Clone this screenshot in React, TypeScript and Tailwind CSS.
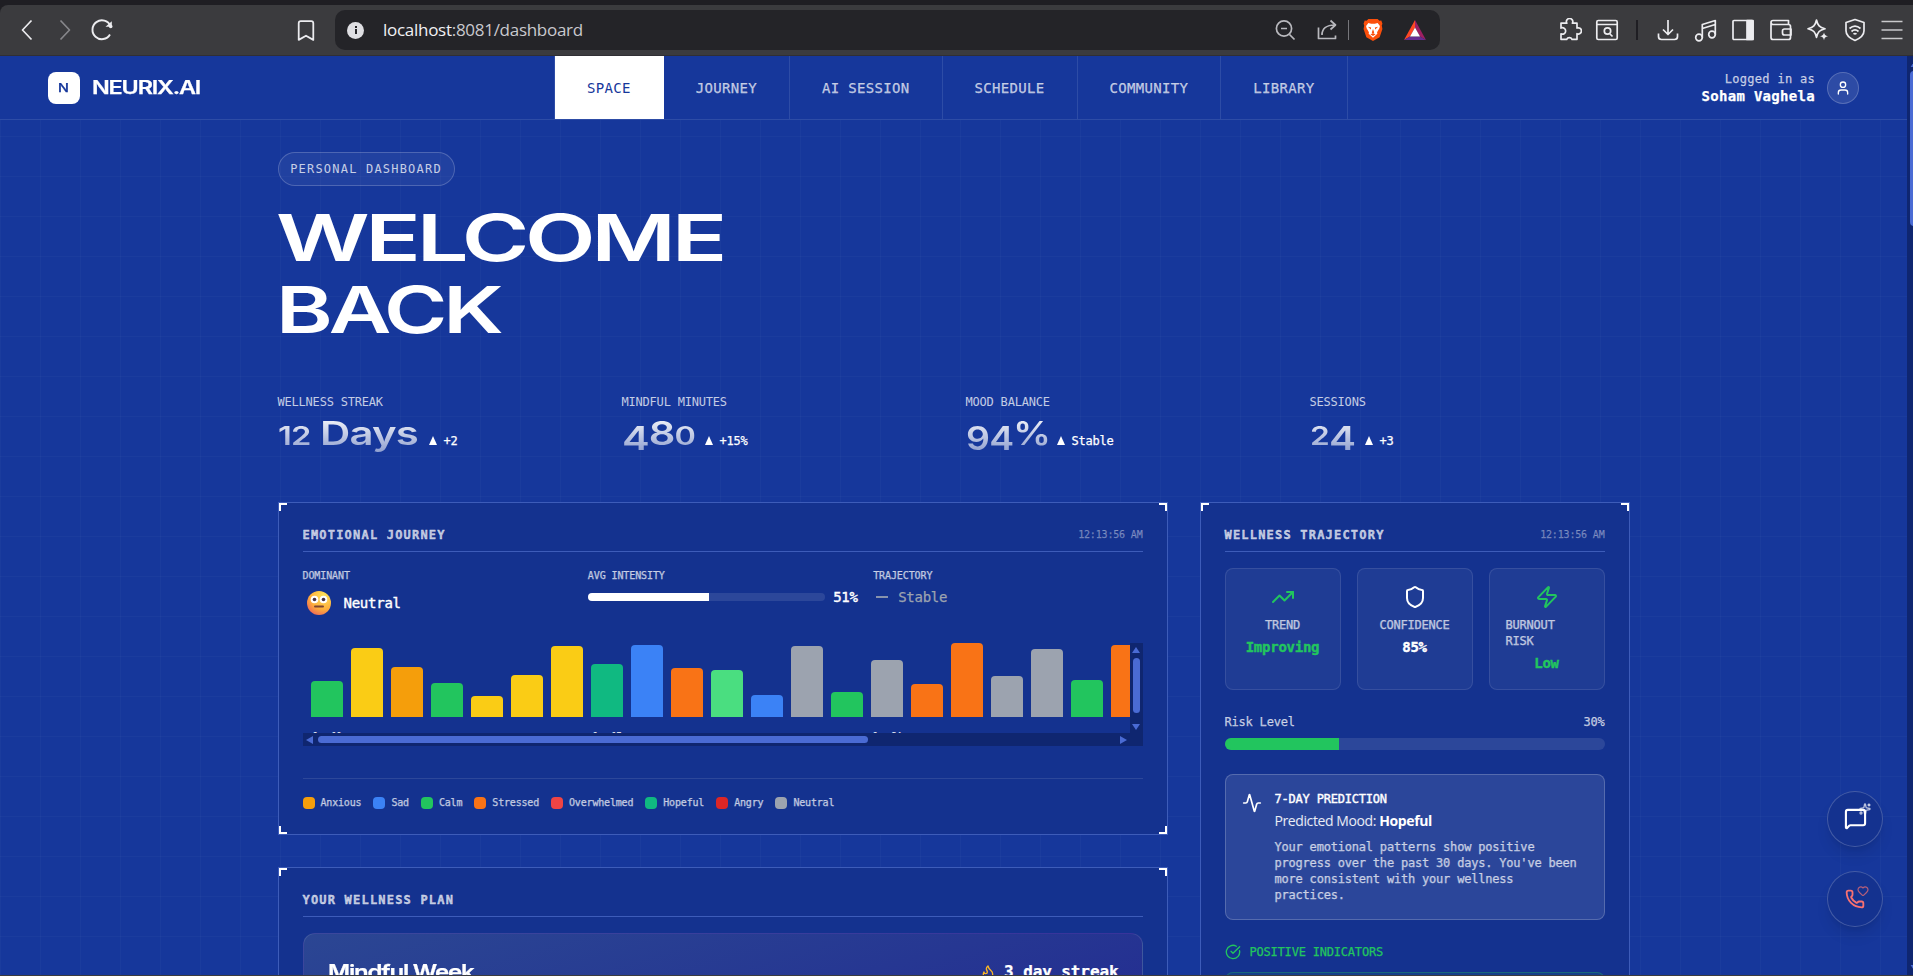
import type { ReactNode } from 'react';
import {
  Activity,
  Bookmark,
  CircleCheckBig,
  Flame,
  Heart,
  MessageSquare,
  Phone,
  Shield,
  Sparkles,
  TrendingUp,
  User,
  Zap,
} from 'lucide-react';

const navItems = ['SPACE', 'JOURNEY', 'AI SESSION', 'SCHEDULE', 'COMMUNITY', 'LIBRARY'];

const stats = [
  { label: 'WELLNESS STREAK', value: '12 Days', change: '+2', width: 'w-[143px]', scale: 'scale-x-[1.31]' },
  { label: 'MINDFUL MINUTES', value: '480', change: '+15%', width: 'w-[75px]', scale: 'scale-x-[1.3]' },
  { label: 'MOOD BALANCE', value: '94%', change: 'Stable', width: 'w-[83px]', scale: 'scale-x-[1.17]' },
  { label: 'SESSIONS', value: '24', change: '+3', width: 'w-[47px]', scale: 'scale-x-[1.27]' },
];

const bars = [
  { height: 36, color: 'bg-[#22c55e]', date: 'Jan 10' },
  { height: 69, color: 'bg-[#facc15]' },
  { height: 50, color: 'bg-[#f59e0b]' },
  { height: 34, color: 'bg-[#22c55e]' },
  { height: 21, color: 'bg-[#facc15]' },
  { height: 42, color: 'bg-[#facc15]' },
  { height: 71, color: 'bg-[#facc15]' },
  { height: 53, color: 'bg-[#10b981]', date: 'Jan 17' },
  { height: 72, color: 'bg-[#3b82f6]' },
  { height: 49, color: 'bg-[#f97316]' },
  { height: 47, color: 'bg-[#4ade80]' },
  { height: 22, color: 'bg-[#3b82f6]' },
  { height: 71, color: 'bg-[#9ca3af]' },
  { height: 25, color: 'bg-[#22c55e]' },
  { height: 57, color: 'bg-[#9ca3af]', date: 'Jan 24' },
  { height: 33, color: 'bg-[#f97316]' },
  { height: 74, color: 'bg-[#f97316]' },
  { height: 41, color: 'bg-[#9ca3af]' },
  { height: 68, color: 'bg-[#9ca3af]' },
  { height: 37, color: 'bg-[#22c55e]' },
  { height: 72, color: 'bg-[#f97316]' },
];

const legend = [
  { name: 'Anxious', color: 'bg-[#f59e0b]' },
  { name: 'Sad', color: 'bg-[#3b82f6]' },
  { name: 'Calm', color: 'bg-[#22c55e]' },
  { name: 'Stressed', color: 'bg-[#f97316]' },
  { name: 'Overwhelmed', color: 'bg-[#ef4444]' },
  { name: 'Hopeful', color: 'bg-[#10b981]' },
  { name: 'Angry', color: 'bg-[#dc2626]' },
  { name: 'Neutral', color: 'bg-[#9ca3af]' },
];

function ToolIcon({ children, className = '' }: { children: ReactNode; className?: string }) {
  return (
    <svg viewBox="0 0 24 24" fill="none" stroke="currentColor" strokeWidth="1.7" strokeLinejoin="round" className={`size-6 shrink-0 ${className}`}>
      {children}
    </svg>
  );
}

function BrowserBar() {
  return (
    <div className="h-14 shrink-0 bg-[#1f1e23] pt-[5px]">
      <div className="flex h-[51px] items-center rounded-tl-lg border-b border-[#302f34] bg-[#3b3b3e] text-[#ececef]">
        <div className="flex w-[335px] shrink-0 items-center">
          <ToolIcon className="ml-[15px]"><path d="M16.5 2.5 7.5 12l9 9.5" /></ToolIcon>
          <ToolIcon className="ml-[14px] text-[#87878b]"><path d="m7.5 2.5 9 9.5-9 9.5" /></ToolIcon>
          <ToolIcon className="ml-[13px]">
            <path d="M20 16.5A9.4 9.4 0 1 1 20.5 8" strokeWidth="1.9" />
            <path d="M15.5 8.8h6.3V3.2z" fill="currentColor" stroke="none" />
            <circle cx="20.7" cy="8.4" r="1.8" fill="currentColor" stroke="none" />
          </ToolIcon>
          <Bookmark className="ml-[179px] h-[25px] w-[26px]" strokeWidth={1.7} />
        </div>
        <div className="flex h-10 w-[1105px] shrink-0 items-center rounded-[10px] bg-[#242428]">
          <div className="ml-3 flex size-[17px] items-center justify-center rounded-full bg-[#dedee2]">
            <svg viewBox="0 0 16 16" className="size-4 text-[#242428]" fill="currentColor">
              <rect x="7" y="7" width="2" height="5" />
              <rect x="7" y="4" width="2" height="2" />
            </svg>
          </div>
          <div className="ml-[19px] flex-1 pb-px font-['Open_Sans','Noto_Sans',sans-serif] text-[17px] tracking-[-0.28px] text-[#c9c9ce]">
            <span className="text-[#f1f1f4]">localhost</span>:8081/dashboard
          </div>
          <ToolIcon className="mr-[18px] text-[#b9b9be]">
            <circle cx="11" cy="10.5" r="7.6" />
            <path d="m16.5 16.5 5 5M8 10.5h6" />
          </ToolIcon>
          <ToolIcon className="mr-[9px] text-[#b9b9be]">
            <path d="M3.5 9.5V20.500h17v-3M7 17c0-6 4-10 13-10M15.500 2.500 20.500 7l-5 4.500" />
          </ToolIcon>
          <div className="h-5 w-px bg-[#77777c]" />
          <svg viewBox="0 0 22 26" className="ml-[13px] h-6 w-[22px]">
            <path d="M6 1h10l2 2 2-.2 1.200 3.400-.7 2 .7 3.800-3 8.800L11 25l-7.200-4.200L.8 12l.7-3.800-.7-2L2 2.800l2 .2z" fill="#fb4f0b" />
            <path d="m6 5.500 3 .7h4l3-.7 2.500 3.200-.6 2.500-2.500 4.300.3 1.500-4.700 4.300-4.700-4.300.3-1.500-2.500-4.300-.6-2.500z" fill="#fff" />
            <path d="m5.500 9.500 3.500.8-.4 2.200zM16.500 9.500l-3.500.8.400 2.200zM11 12l1.300 3.800L11 17l-1.300-1.200zM8.200 17.500l2.800-1 2.800 1L11 19.500z" fill="#fb4f0b" />
          </svg>
          <svg viewBox="0 0 22 20" className="mr-[14px] ml-[20px] h-5 w-[22px]">
            <path d="M11 0 0 20l6-3.500L11 7.500z" fill="#ff4724" />
            <path d="m11 0 11 20-6-3.500-5-9z" fill="#9e1f63" />
            <path d="M0 20h22l-6-3.500H6z" fill="#662d91" />
            <path d="m11 7.500 5 9H6z" fill="#fff" />
          </svg>
        </div>
        <div className="flex flex-1 items-center pl-[118px]">
          <ToolIcon>
            <path d="M3 5.200h5.800a3.200 3.200 0 1 1 5.600 0H19v4.900a3.100 3.100 0 1 1 0 5.600v5.600h-5a2.900 2.900 0 0 0-5.300 0H3v-5.500a3.200 3.200 0 1 0 0-5.700z" />
          </ToolIcon>
          <ToolIcon className="ml-[13px]">
            <rect x="1.800" y="2.500" width="20.400" height="19" rx="1.500" />
            <path d="M2 6.500h20M15 16l2.500 2.500" />
            <circle cx="12.500" cy="13" r="3.200" />
          </ToolIcon>
          <div className="mr-[18px] ml-[17px] h-5 w-[2px] bg-[#1f1e23]" />
          <ToolIcon><path d="M12 2v14M7 11.500l5 5 5-5M2.500 15.500v3a3 3 0 0 0 3 3h13a3 3 0 0 0 3-3v-3" /></ToolIcon>
          <ToolIcon className="ml-[14px]">
            <circle cx="5" cy="19.500" r="3.300" />
            <circle cx="18" cy="16.500" r="3.300" />
            <path d="M8.300 19.500V6.500l13-4v14M8.300 10.500l13-4" />
          </ToolIcon>
          <ToolIcon className="ml-[13px]">
            <rect x="2" y="2.500" width="20" height="19" rx="1" />
            <path d="M16 2.500h6v19h-6z" fill="currentColor" />
          </ToolIcon>
          <ToolIcon className="ml-[14px]">
            <path d="M2 5v14.500a2 2 0 0 0 2 2h15.500a2 2 0 0 0 2-2V8.500a2 2 0 0 0-2-2H4a2 2 0 0 1 0-4h15.500V6" />
            <path d="M22 11h-6.500a2 2 0 0 0-2 2v2a2 2 0 0 0 2 2H22z" />
          </ToolIcon>
          <ToolIcon className="ml-[13px]">
            <path d="M10.500 2c1.200 5.500 3 7.300 8.500 8.700-5.500 1.400-7.300 3.200-8.500 8.700C9.300 13.900 7.500 12.100 2 10.700 7.500 9.300 9.300 7.500 10.500 2z" />
            <path d="M18 14.500c.6 2.500 1.300 3.200 4 3.800-2.700.6-3.400 1.300-4 3.900-.6-2.600-1.300-3.300-4-3.900 2.700-.6 3.400-1.300 4-3.800z" fill="currentColor" stroke="none" />
          </ToolIcon>
          <ToolIcon className="ml-[13px]">
            <path d="m12 1.500 9 3v8.300c0 4.500-3.500 7.400-9 9.700-5.500-2.300-9-5.200-9-9.700V4.500z" />
            <path d="M6.500 10.500c3.500-3 7.500-3 11 0M8.500 13.500c2.300-2 4.700-2 7 0M10.500 16.200c1-.8 2-.8 3 0" />
          </ToolIcon>
          <ToolIcon className="ml-[13px] text-[#c9c9cc]"><path d="M1.500 3.500h21M1.500 12h21M1.500 20.500h21" /></ToolIcon>
        </div>
      </div>
    </div>
  );
}

function Header() {
  return (
    <header className="grid h-16 shrink-0 grid-cols-[554px_1fr_auto] border-b border-[#2d4ca6] bg-[#16379b] [-webkit-text-stroke:0.25px]">
      <div className="flex items-center pl-12">
        <div className="flex size-8 items-center justify-center rounded-lg bg-white font-['Inter',sans-serif] text-xs font-medium text-[#16379b]">
          <span className="inline-block scale-x-[1.2]">N</span>
        </div>
        <span className="ml-3 inline-block origin-left scale-x-[1.3] font-['Inter',sans-serif] text-[18px] font-semibold tracking-[-0.9px]">NEURIX.AI</span>
      </div>
      <nav className="flex border-l border-[#2d4ca6]">
        {navItems.map((item, i) => (
          <a
            key={item}
            className={`flex items-center border-r px-8 text-sm tracking-[0.320px] ${
              i === 0 ? 'border-white bg-white text-[#16379b] [-webkit-text-stroke:0]' : 'border-[#2d4ca6] text-white/70'
            }`}
          >
            {item}
          </a>
        ))}
      </nav>
      <div className="flex items-center pr-12">
        <div className="text-right">
          <div className="text-xs leading-[18px] tracking-[0.300px] text-white/70">Logged in as</div>
          <div className="-mt-px mb-px text-sm leading-[18px] font-bold tracking-[0.300px]">Soham Vaghela</div>
        </div>
        <div className="ml-3 flex size-8 items-center justify-center rounded-full border border-white/20 bg-white/10">
          <User className="size-4" />
        </div>
      </div>
    </header>
  );
}

// Text figures: 0-2 sit at x-height, 3-5, 7 and 9 hang below the baseline
function TextFigures({ value }: { value: string }) {
  return (
    <>
      {value.split('').map((char, i) => {
        if ('012'.includes(char)) return <span key={i} className="text-[25px] leading-none">{char}</span>;
        if ('34579'.includes(char)) return <span key={i} className="align-[-5px] leading-none">{char}</span>;
        return char;
      })}
    </>
  );
}

function Stats() {
  return (
    <div className="mb-12 grid grid-cols-4 gap-6">
      {stats.map((stat) => (
        <div key={stat.label} className="h-[60px]">
          <div className="text-xs leading-4 tracking-[-0.200px] text-white/75">{stat.label}</div>
          <div className="mt-1 flex items-baseline">
            <div className={`shrink-0 ${stat.width}`}>
              <span
                className={`inline-block h-10 origin-left bg-gradient-to-b from-white to-white/50 bg-clip-text font-['Inter',sans-serif] text-[32px] leading-10 font-semibold tracking-[-0.700px] whitespace-nowrap text-transparent ${stat.scale}`}
              >
                <TextFigures value={stat.value} />
              </span>
            </div>
            <div className="ml-2 flex items-baseline text-xs leading-4 tracking-[-0.200px] [-webkit-text-stroke:0.25px]">
              <svg viewBox="0 0 8 9" className="mr-[7px] h-[9px] w-2"><path d="M4 0l4 9H0z" fill="currentColor" /></svg>
              {stat.change}
            </div>
          </div>
        </div>
      ))}
    </div>
  );
}

function Panel({ title, time, children, className = '' }: { title: string; time?: string; children: ReactNode; className?: string }) {
  return (
    <section className={`relative border border-[#3d5cb9] bg-[#14328f] p-6 [-webkit-text-stroke:0.25px] ${className}`}>
      <i className="absolute top-0 left-0 size-2 border-t-2 border-l-2 border-white" />
      <i className="absolute top-0 right-0 size-2 border-t-2 border-r-2 border-white" />
      <i className="absolute bottom-0 left-0 size-2 border-b-2 border-l-2 border-white" />
      <i className="absolute right-0 bottom-0 size-2 border-r-2 border-b-2 border-white" />
      <div className="mb-4 flex h-[25px] justify-between border-b border-[#3d5cb9] leading-4">
        <h2 className="text-xs leading-4 font-bold tracking-[1.200px] text-white/70 [-webkit-text-stroke:0.4px]">{title}</h2>
        {time && <span className="text-[10px] tracking-[-0.170px] text-white/35">{time}</span>}
      </div>
      {children}
    </section>
  );
}

function NeutralFace() {
  return (
    <svg viewBox="0 0 24 24" className="ml-1 size-6">
      <defs>
        <radialGradient id="face" cx="0.700" cy="0.200" r="0.950">
          <stop offset="0" stopColor="#ffe35a" />
          <stop offset="0.600" stopColor="#fdae3c" />
          <stop offset="1" stopColor="#ec5a5c" />
        </radialGradient>
      </defs>
      <circle cx="12" cy="12" r="12" fill="url(#face)" />
      <circle cx="7.500" cy="8.500" r="3.800" fill="#fff" />
      <circle cx="16.500" cy="8.500" r="3.800" fill="#fff" />
      <circle cx="7.500" cy="8.500" r="1.800" fill="#4b3344" />
      <circle cx="16.500" cy="8.500" r="1.800" fill="#4b3344" />
      <rect x="7" y="14.500" width="10" height="2" rx="1" fill="#7d4533" />
    </svg>
  );
}

function JourneyChart() {
  return (
    <div className="mt-6 mb-8 h-[103px] bg-[#0f2670]">
      <div className="flex h-[90px]">
        <div className="flex h-[90px] w-[827px] gap-2 overflow-hidden bg-[#14328f] pl-2">
          {bars.map((bar, i) => (
            <div key={i} className="w-8 shrink-0">
              <div className="flex h-[74px] items-end">
                <div className={`w-8 rounded-t ${bar.color}`} style={{ height: bar.height }} />
              </div>
              {bar.date && <div className="mt-[14px] ml-[2px] text-[8px] leading-3 whitespace-nowrap text-white/80">{bar.date}</div>}
            </div>
          ))}
        </div>
        <div className="flex w-[13px] flex-col items-center pt-1">
          <svg viewBox="0 0 8 6" className="h-1.5 w-2"><path d="M4 0l4 6H0z" fill="#4a6bd4" /></svg>
          <div className="mt-[5px] mb-[11px] h-[55px] w-[7px] rounded-full bg-[#4a6bd4]" />
          <svg viewBox="0 0 8 6" className="h-1.5 w-2"><path d="M0 0h8L4 6z" fill="#4a6bd4" /></svg>
        </div>
      </div>
      <div className="flex h-[13px] items-center pl-[3px]">
        <svg viewBox="0 0 7 8" className="h-2 w-[7px]"><path d="M7 0v8L0 4z" fill="#4a6bd4" /></svg>
        <div className="mr-[252px] ml-[5px] h-[7px] w-[550px] rounded-full bg-[#4a6bd4]" />
        <svg viewBox="0 0 7 8" className="h-2 w-[7px]"><path d="M0 0v8l7-4z" fill="#4a6bd4" /></svg>
      </div>
    </div>
  );
}

function EmotionalJourney() {
  return (
    <Panel title="EMOTIONAL JOURNEY" time="12:13:56 AM" className="h-[333px]">
      <div className="grid h-[51px] grid-cols-3 gap-4">
        <div>
          <div className="mb-1 text-[10px] leading-[15px] tracking-[-0.100px] text-white/65">DOMINANT</div>
          <div className="flex h-8 items-center gap-[13px]">
            <NeutralFace />
            <span className="text-sm font-medium tracking-[-0.250px] [-webkit-text-stroke:0.4px]">Neutral</span>
          </div>
        </div>
        <div>
          <div className="mb-1 text-[10px] leading-[15px] tracking-[-0.100px] text-white/65">AVG INTENSITY</div>
          <div className="flex h-5 items-center gap-2">
            <div className="h-2 flex-1 overflow-hidden rounded-full bg-white/10">
              <div className="h-full bg-white" style={{ width: '51%' }} />
            </div>
            <span className="w-6 text-sm font-medium tracking-[-0.250px] [-webkit-text-stroke:0.4px]">51%</span>
          </div>
        </div>
        <div>
          <div className="mb-1 text-[10px] leading-[15px] tracking-[-0.100px] text-white/65">TRAJECTORY</div>
          <div className="flex h-5 items-center gap-2.5 pl-[3px] text-sm tracking-[-0.250px] text-[#9ca3af]">
            <div className="h-0.5 w-3 bg-[#8793ad]" />
            Stable
          </div>
        </div>
      </div>
      <JourneyChart />
      <div className="flex h-8 gap-3 border-t border-white/10 pt-4">
        {legend.map((item) => (
          <div key={item.name} className="flex h-[15px] items-center gap-1.5">
            <span className={`size-3 rounded ${item.color}`} />
            <span className="text-[10px] tracking-[-0.180px] text-white/65">{item.name}</span>
          </div>
        ))}
      </div>
    </Panel>
  );
}

function WellnessPlan() {
  return (
    <Panel title="YOUR WELLNESS PLAN" className="h-[420px]">
      <div className="flex h-60 justify-between rounded-xl border border-white/10 bg-gradient-to-br from-[#2b4693] to-[#221c90] p-6">
        <h3 className="inline-block h-7 origin-left scale-x-[1.2] font-['Inter',sans-serif] text-xl leading-7 font-semibold tracking-[-1px]">Mindful Week</h3>
        <div className="-mr-px flex h-7 items-center gap-2 font-bold tracking-[-0.100px]">
          <Flame className="size-4 text-[#fbb724]" />
          3 day streak
        </div>
      </div>
    </Panel>
  );
}

function MetricTile({ icon, label, value, color }: { icon: ReactNode; label: string; value: string; color: string }) {
  return (
    <div className="flex flex-col items-center rounded-lg border border-white/10 bg-white/5 p-4">
      <div className={color}>{icon}</div>
      <div className="mt-2 text-xs leading-4 tracking-[-0.200px] text-white/65">{label}</div>
      <div className={`mt-1 text-sm leading-5 font-bold tracking-[-0.250px] [-webkit-text-stroke:0.4px] ${color}`}>{value}</div>
    </div>
  );
}

function WellnessTrajectory() {
  return (
    <Panel title="WELLNESS TRAJECTORY" time="12:13:56 AM" className="h-[800px]">
      <div className="grid h-[122px] grid-cols-3 gap-4">
        <MetricTile icon={<TrendingUp className="size-6" />} label="TREND" value="Improving" color="text-[#22c55e]" />
        <MetricTile icon={<Shield className="size-6" />} label="CONFIDENCE" value="85%" color="text-white" />
        <MetricTile icon={<Zap className="size-6" />} label="BURNOUT RISK" value="Low" color="text-[#22c55e]" />
      </div>
      <div className="mt-6 flex justify-between text-xs leading-4 tracking-[-0.200px] text-white/70">
        <span>Risk Level</span>
        <span>30%</span>
      </div>
      <div className="mt-2 h-3 overflow-hidden rounded-full bg-white/10">
        <div className="h-full bg-[#22c55e]" style={{ width: '30%' }} />
      </div>
      <div className="mt-6 flex h-[146px] gap-[13px] rounded-lg border border-white/20 bg-white/10 p-4">
        <Activity className="mt-0.5 size-5 shrink-0" />
        <div>
          <div className="text-xs leading-4 font-medium tracking-[-0.200px] [-webkit-text-stroke:0.4px]">7-DAY PREDICTION</div>
          <div className="mt-1 font-['Open_Sans','Noto_Sans',sans-serif] text-sm leading-5 tracking-[-0.400px] text-white/90 [-webkit-text-stroke:0]">
            Predicted Mood: <span className="font-bold text-white">Hopeful</span>
          </div>
          <p className="mt-2 text-xs leading-4 tracking-[-0.200px] text-white/65">
            Your emotional patterns show positive progress over the past 30 days. You've been more consistent with your wellness practices.
          </p>
        </div>
      </div>
      <div className="mt-6 flex h-4 items-center gap-[9px] text-xs tracking-[-0.200px] text-[#22c55e]">
        <CircleCheckBig className="size-4" />
        POSITIVE INDICATORS
      </div>
      <div className="mt-3 h-12 rounded-lg border border-[#22c55e]/30 bg-[#22c55e]/10" />
    </Panel>
  );
}

function FloatingActions() {
  return (
    <div className="absolute top-[735px] right-[30px] flex flex-col gap-6">
      <button className="relative flex size-14 items-center justify-center rounded-full border border-white/20 bg-[#14328f] pb-0.5 shadow-lg">
        <MessageSquare className="size-[23px]" strokeWidth={2.2} />
        <Sparkles className="absolute top-[11px] right-[11px] size-3 text-white/70" strokeWidth={2.6} />
      </button>
      <button className="relative flex size-14 items-center justify-center rounded-full border border-white/20 bg-[#14328f] text-[#f87171] shadow-lg">
        <Phone className="size-5" strokeWidth={2.2} />
        <Heart className="absolute top-[13px] right-[13px] size-3 opacity-70" strokeWidth={2.4} />
      </button>
    </div>
  );
}

export default function App() {
  return (
    <div className="flex h-[976px] w-full flex-col overflow-hidden border-b border-[#3b3b3e] bg-[#16379b] font-['DejaVu_Sans_Mono',monospace] text-white">
      <BrowserBar />
      <div className="relative flex min-h-0 flex-1">
        <div className="flex min-w-0 flex-1 flex-col overflow-hidden">
          <Header />
          <main className="min-h-0 flex-1 bg-[linear-gradient(to_right,rgba(255,255,255,0.022)_1px,transparent_1px),linear-gradient(to_bottom,rgba(255,255,255,0.022)_1px,transparent_1px)] bg-[size:40px_40px] bg-[position:0_16px]">
            <div className="mx-auto w-[1352px] pt-8">
              <div className="flex h-[34px] w-[177px] items-center justify-center rounded-full border border-white/20 bg-white/5 text-xs tracking-[1.200px] text-white/75">
                PERSONAL DASHBOARD
              </div>
              <h1 className="mt-4 mb-12 -ml-0.5 flex flex-col items-start font-['Inter',sans-serif] text-[64px] leading-[72px] font-semibold tracking-[-3px]">
                <span className="origin-left scale-x-[1.435]">WELCOME</span>
                <span className="origin-left scale-x-[1.345]">BACK</span>
              </h1>
              <Stats />
              <div className="grid grid-cols-[890px_430px] items-start gap-8">
                <div className="flex flex-col gap-8">
                  <EmotionalJourney />
                  <WellnessPlan />
                </div>
                <WellnessTrajectory />
              </div>
            </div>
          </main>
        </div>
        <div className="flex w-1.5 flex-col overflow-hidden bg-[#0f2670] pt-1 pl-[3px]">
          <svg viewBox="0 0 10 8" className="h-[7px] w-2.5"><path d="M5 0l5 8H0z" fill="#4a6bd4" /></svg>
          <div className="mt-1 h-[155px] w-2 rounded-full bg-[#4a6bd4]" />
          <svg viewBox="0 0 10 8" className="mt-auto mb-[3px] h-[7px] w-2.5"><path d="M0 0h10L5 8z" fill="#4a6bd4" /></svg>
        </div>
        <FloatingActions />
      </div>
    </div>
  );
}
